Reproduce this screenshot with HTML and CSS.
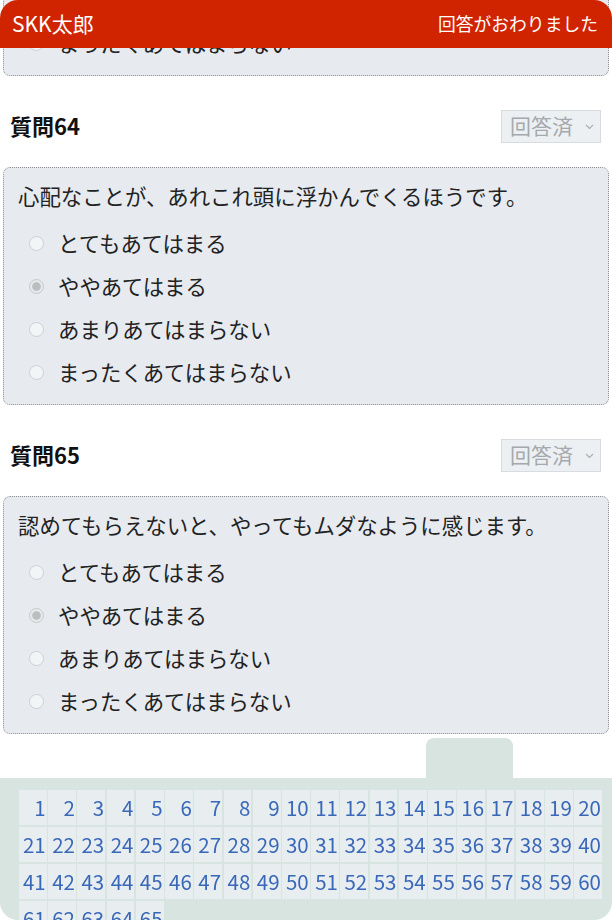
FILE: index.html
```html
<!DOCTYPE html>
<html lang="ja">
<head>
<meta charset="utf-8">
<title>質問</title>
<link rel="stylesheet" href="styles.css">
</head>
<body>
<header class="topbar">
  <span class="user">SKK太郎</span>
  <span class="status">回答がおわりました</span>
</header>

<main class="questions">
  <div class="card card-partial">
    <ul class="options">
      <li><input type="radio" name="q63" disabled><span>とてもあてはまる</span></li>
      <li><input type="radio" name="q63" disabled><span>ややあてはまる</span></li>
      <li><input type="radio" name="q63" disabled><span>あまりあてはまらない</span></li>
      <li><input type="radio" name="q63" disabled><span>まったくあてはまらない</span></li>
    </ul>
  </div>

  <section class="question">
    <div class="q-head">
      <h2>質問64</h2>
      <span class="answered">回答済<svg class="chev" width="9" height="6" viewBox="0 0 9 6"><path d="M1 1l3.5 3.5L8 1" fill="none" stroke="#a9adb1" stroke-width="1.1"/></svg></span>
    </div>
    <div class="card">
      <p class="q-text">心配なことが、あれこれ頭に浮かんでくるほうです。</p>
      <ul class="options">
        <li><input type="radio" name="q64" disabled><span>とてもあてはまる</span></li>
        <li><input type="radio" name="q64" disabled checked><span>ややあてはまる</span></li>
        <li><input type="radio" name="q64" disabled><span>あまりあてはまらない</span></li>
        <li><input type="radio" name="q64" disabled><span>まったくあてはまらない</span></li>
      </ul>
    </div>
  </section>

  <section class="question">
    <div class="q-head">
      <h2>質問65</h2>
      <span class="answered">回答済<svg class="chev" width="9" height="6" viewBox="0 0 9 6"><path d="M1 1l3.5 3.5L8 1" fill="none" stroke="#a9adb1" stroke-width="1.1"/></svg></span>
    </div>
    <div class="card">
      <p class="q-text">認めてもらえないと、やってもムダなように感じます。</p>
      <ul class="options">
        <li><input type="radio" name="q65" disabled><span>とてもあてはまる</span></li>
        <li><input type="radio" name="q65" disabled checked><span>ややあてはまる</span></li>
        <li><input type="radio" name="q65" disabled><span>あまりあてはまらない</span></li>
        <li><input type="radio" name="q65" disabled><span>まったくあてはまらない</span></li>
      </ul>
    </div>
  </section>
</main>

<footer class="navpanel">
  <div class="tab"></div>
  <div class="panel">
    <div class="grid">
      <a class="num">1</a><a class="num">2</a><a class="num">3</a><a class="num">4</a><a class="num">5</a>
      <a class="num">6</a><a class="num">7</a><a class="num">8</a><a class="num">9</a><a class="num">10</a>
      <a class="num">11</a><a class="num">12</a><a class="num">13</a><a class="num">14</a><a class="num">15</a>
      <a class="num">16</a><a class="num">17</a><a class="num">18</a><a class="num">19</a><a class="num">20</a>
      <a class="num">21</a><a class="num">22</a><a class="num">23</a><a class="num">24</a><a class="num">25</a>
      <a class="num">26</a><a class="num">27</a><a class="num">28</a><a class="num">29</a><a class="num">30</a>
      <a class="num">31</a><a class="num">32</a><a class="num">33</a><a class="num">34</a><a class="num">35</a>
      <a class="num">36</a><a class="num">37</a><a class="num">38</a><a class="num">39</a><a class="num">40</a>
      <a class="num">41</a><a class="num">42</a><a class="num">43</a><a class="num">44</a><a class="num">45</a>
      <a class="num">46</a><a class="num">47</a><a class="num">48</a><a class="num">49</a><a class="num">50</a>
      <a class="num">51</a><a class="num">52</a><a class="num">53</a><a class="num">54</a><a class="num">55</a>
      <a class="num">56</a><a class="num">57</a><a class="num">58</a><a class="num">59</a><a class="num">60</a>
      <a class="num">61</a><a class="num">62</a><a class="num">63</a><a class="num">64</a><a class="num">65</a>
    </div>
  </div>
</footer>
</body>
</html>
```

FILE: styles.css
```css
html, body {
  margin: 0;
  padding: 0;
  background: #ffffff;
}

body {
  width: 612px;
  height: 920px;
  overflow: hidden;
  font-family: "Noto Sans CJK JP", "Noto Sans", sans-serif;
  color: #222222;
}

.topbar {
  position: fixed;
  top: 0;
  left: 0;
  right: 0;
  height: 48px;
  box-sizing: border-box;
  padding: 0 14px 2px 12px;
  display: flex;
  align-items: center;
  justify-content: space-between;
  background: #d02400;
  color: #ffffff;
  border-radius: 18px 18px 0 0;
  z-index: 2;
}

.user {
  font-size: 21px;
}

.status {
  font-size: 17.8px;
}

.questions {
  padding: 0 3px;
}

.card {
  background: #e7ebf0;
  border: 1px dotted #8b8e92;
  border-radius: 7px;
  padding: 12px 14px 10px;
}

.card-partial {
  margin-top: -130px;
}

.q-head {
  height: 33px;
  margin: 34px 8px 24px 7px;
  display: flex;
  align-items: center;
  justify-content: space-between;
}

.q-head h2 {
  margin: 0 0 3px;
  font-size: 22px;
  font-weight: 700;
  line-height: 1;
  color: #111111;
}

.answered {
  width: 100px;
  height: 33px;
  box-sizing: border-box;
  padding: 0 0 3px 8px;
  display: flex;
  align-items: center;
  gap: 12px;
  border: 1px solid #d8dce0;
  background: #edf0f3;
  color: #a5a9ad;
  font-size: 21px;
}

.chev {
  margin-top: 3px;
}

.q-text {
  margin: 0;
  font-size: 21.4px;
  line-height: 32px;
}

.options {
  list-style: none;
  margin: 10px 0 0;
  padding: 0;
}

.options li {
  height: 43px;
  display: flex;
  align-items: center;
  font-size: 21.4px;
}

.options li span {
  margin-top: -2px;
}

.options input {
  appearance: none;
  -webkit-appearance: none;
  width: 15px;
  height: 15px;
  margin: 0 14px 0 11px;
  box-sizing: border-box;
  border: 1px solid #cdd0d5;
  border-radius: 50%;
  background: #f2f4f6;
}

.options input:checked {
  border-color: #c6c8cb;
  background: radial-gradient(circle, #bbbdc0 0 3.8px, #e8e9eb 4.8px);
}

.navpanel {
  position: fixed;
  left: 0;
  right: 0;
  bottom: 0;
  display: flex;
  flex-direction: column;
}

.tab {
  width: 87px;
  height: 40px;
  margin-left: 426px;
  background: #d7e4e0;
  border-radius: 8px 8px 0 0;
}

.panel {
  height: 142px;
  box-sizing: border-box;
  padding: 12px 10px 0 19px;
  background: #d7e4e0;
  border-radius: 0 0 18px 18px;
  overflow: hidden;
}

.grid {
  display: grid;
  grid-template-columns: repeat(20, 1fr);
  gap: 2px 1.5px;
}

.num {
  height: 35px;
  line-height: 34px;
  padding-right: 1px;
  text-align: right;
  background: #e8edf0;
  color: #3a68b8;
  font-size: 20.5px;
}
```
